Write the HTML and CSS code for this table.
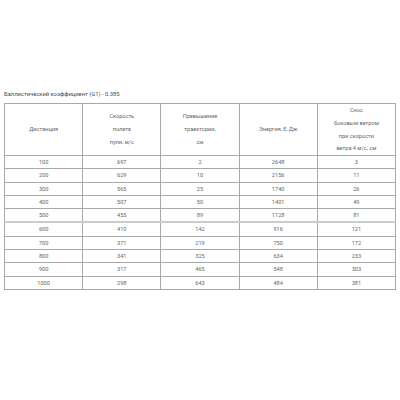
FILE: index.html
```html
<!DOCTYPE html>
<html lang="ru">
<head>
<meta charset="utf-8">
<link rel="stylesheet" href="styles.css">
</head>
<body>
<div class="page">
  <p class="caption">Баллистический коэффициент (G1) - 0.385</p>
  <table class="ballistics">
    <thead>
      <tr>
        <th>Дистанция</th>
        <th>Скорость<br>полета<br>пули, м/с</th>
        <th>Превышение<br>траектории,<br>см</th>
        <th>Энергия, Е, Дж</th>
        <th>Снос<br>боковым ветром<br>при скорости<br>ветра 4 м/с, см</th>
      </tr>
    </thead>
    <tbody>
      <tr><td>100</td><td>697</td><td>2</td><td>2648</td><td>3</td></tr>
      <tr><td>200</td><td>629</td><td>10</td><td>2156</td><td>11</td></tr>
      <tr><td>300</td><td>565</td><td>25</td><td>1740</td><td>26</td></tr>
      <tr><td>400</td><td>507</td><td>50</td><td>1401</td><td>49</td></tr>
      <tr><td>500</td><td>455</td><td>89</td><td>1128</td><td>81</td></tr>
      <tr class="split"><td>600</td><td>410</td><td>142</td><td>916</td><td>121</td></tr>
      <tr><td>700</td><td>371</td><td>219</td><td>750</td><td>172</td></tr>
      <tr><td>800</td><td>341</td><td>325</td><td>634</td><td>233</td></tr>
      <tr><td>900</td><td>317</td><td>465</td><td>548</td><td>303</td></tr>
      <tr><td>1000</td><td>298</td><td>643</td><td>484</td><td>381</td></tr>
    </tbody>
  </table>
</div>
</body>
</html>
```

FILE: styles.css
```css
html, body {
  margin: 0;
  padding: 0;
  background: #ffffff;
}

.page {
  padding: 91px 4px 0 4px;
  font-family: Roboto, "Liberation Sans", sans-serif;
}

.caption {
  margin: 0 0 5px 0;
  font-size: 5.8px;
  line-height: 7px;
  color: #4a4a4a;
}

.ballistics {
  width: 392px;
  border-collapse: collapse;
  table-layout: fixed;
  font-size: 5.6px;
  color: #666666;
}

.ballistics th,
.ballistics td {
  border: 1px solid #a8a8a8;
  padding: 0;
  text-align: center;
  font-weight: normal;
}

.ballistics th {
  height: 51px;
  line-height: 12.7px;
  vertical-align: middle;
}

.ballistics td {
  height: 12.3px;
  line-height: 12.3px;
}

.ballistics tr.split td {
  border-top: 2px solid #cccccc;
}
```
